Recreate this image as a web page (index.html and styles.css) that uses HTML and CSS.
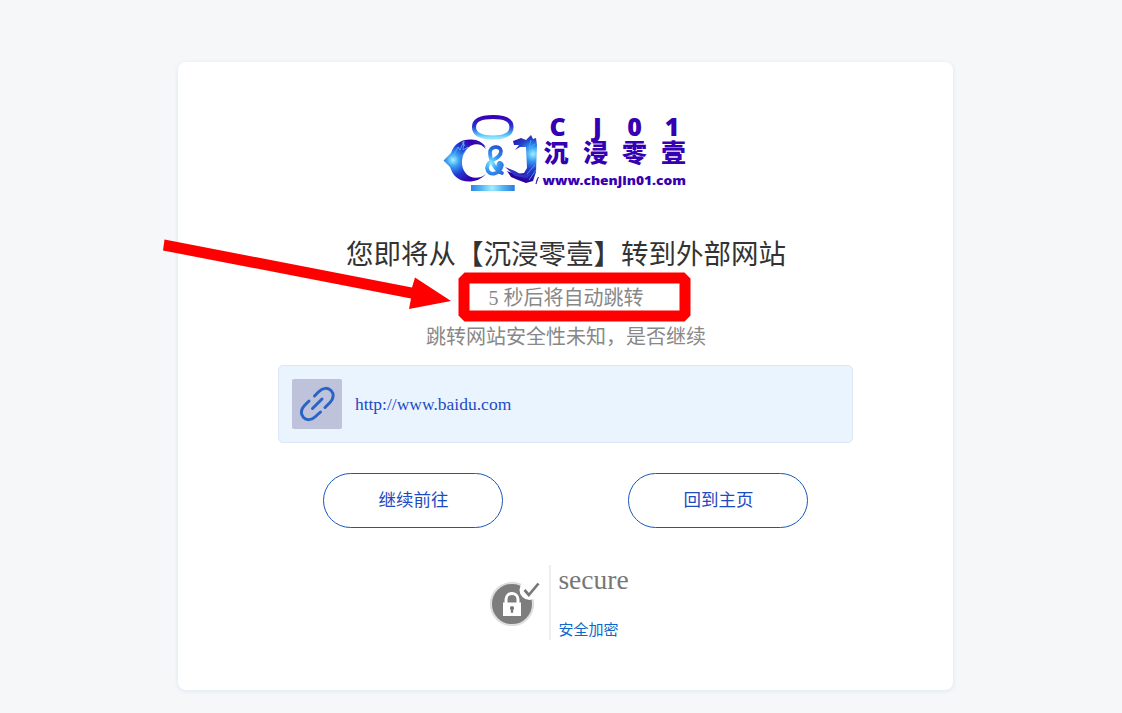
FILE: index.html
```html
<!DOCTYPE html>
<html lang="zh-CN">
<head>
<meta charset="utf-8">
<title>沉浸零壹</title>
<link rel="stylesheet" href="styles.css">
</head>
<body>
<main class="card">
  <svg class="logo" viewBox="436 106 260 92" role="img" aria-label="沉浸零壹">
    <defs>
      <linearGradient id="ring" x1="0" y1="0" x2="0" y2="1">
        <stop offset="0" stop-color="#3900b5"/><stop offset=".45" stop-color="#2735d2"/><stop offset=".85" stop-color="#54bff8"/><stop offset="1" stop-color="#8ce4ff"/>
      </linearGradient>
      <radialGradient id="glow" gradientUnits="userSpaceOnUse" cx="453" cy="160" r="25">
        <stop offset="0" stop-color="#a5f3ff"/><stop offset=".25" stop-color="#3aa0f4"/><stop offset=".6" stop-color="#203ad0"/><stop offset="1" stop-color="#3300b0"/>
      </radialGradient>
      <radialGradient id="amp" gradientUnits="userSpaceOnUse" cx="491" cy="163" r="22">
        <stop offset="0" stop-color="#87ebff"/><stop offset=".35" stop-color="#329af2"/><stop offset="1" stop-color="#2836cb"/>
      </radialGradient>
      <radialGradient id="hook" gradientUnits="userSpaceOnUse" cx="533" cy="154" r="29">
        <stop offset="0" stop-color="#9cf0ff"/><stop offset=".25" stop-color="#359af2"/><stop offset=".52" stop-color="#273fc9"/><stop offset="1" stop-color="#2a009c"/>
      </radialGradient>
      <radialGradient id="bar" gradientUnits="userSpaceOnUse" cx="492" cy="188" r="23">
        <stop offset="0" stop-color="#a3f2ff"/><stop offset=".45" stop-color="#55b9f5"/><stop offset="1" stop-color="#267bdc"/>
      </radialGradient>
    </defs>
    <path d="M493 117C507 117 511.500 121 511.500 127S507 137.500 493 137.500 474 133 474 127 479 117 493 117Z" fill="none" stroke="url(#ring)" stroke-width="4.100"/>
    <path fill="url(#glow)" d="M443.500 160.500 451 153C454 144 461 139.500 470 139.500C477 139 482 142 486 147C478 142.500 471 144 467 149C459 158 461 172 470 176.500C475 179 481 178 486 174C480 181 470 183 462 180.500C454 177.500 452 172 450 167Z"/>
    <path d="M453 157l5-10 2 3 4-9-1 9 5-3-7 10M462 142l3 4" fill="none" stroke="#58b7fa" stroke-width=".8"/>
    <path d="M475 140l8 4 3 5-6-5-7-2Z" fill="#3412b6"/>
    <path fill="none" stroke="url(#amp)" stroke-width="3.700" stroke-linecap="round" stroke-linejoin="round" d="M502 173C496 171 490 161 490 153C489 146 501 145 501 151C501 160 487 159 487 168C488 177 500 175 502 165C500 160 496 165 500 168"/>
    <path fill="url(#hook)" d="M513 141 521 138 526 140 529 137 531 135 533 139 536 138 537 145 536 172 533 181 526 183 518 180 511 177 507 171 515 174 524 173 527 168 526 147 520 147 515 150 519 145 514 145Z"/>
    <path d="M505 167l10 4 7 4 10-2-5 5-12-2Z" fill="#2e34c8"/>
    <path d="M531 140l-2 8 6-4M527 174l8-9m-6 15 7-10" fill="none" stroke="#3bb8fb" stroke-width=".8"/>
    <path d="M538.500 177l-2.500 7 .8-4Z" fill="#3000aa" stroke="#3000aa" stroke-width=".6"/>
    <rect x="471" y="185" width="43.700" height="6" fill="url(#bar)"/>
    <g class="logo-text">
      <g class="logo-code"><text x="557.500" y="135.500">C</text><text x="597.500" y="135.500">J</text><text x="634.500" y="135.500">0</text><text x="672" y="135.500">1</text></g>
      <g class="logo-name"><text x="556" y="162">沉</text><text x="595.500" y="162">浸</text><text x="634.500" y="162">零</text><text x="673.500" y="162">壹</text></g>
      <text class="logo-domain" x="542.500" y="185" textLength="143.500" lengthAdjust="spacingAndGlyphs">www.chenjin01.com</text>
    </g>
  </svg>
  <h1 class="title">您即将从【沉浸零壹】转到外部网站</h1>
  <p class="message countdown">5 秒后将自动跳转</p>
  <p class="message">跳转网站安全性未知，是否继续</p>
  <div class="destination">
    <span class="link-tile">
      <svg width="50" height="50" viewBox="0 0 50 50" fill="none" stroke="#2864c5" stroke-width="3" stroke-linecap="round">
        <path d="M22.500 17l4.500-4.500c4-4 9-4 12-1s3 8-1 12L33 28.500M17 22l-4.500 4.500c-4 4-4 9-1 12s8 3 12-1L28.500 33M20.500 29.500l9.500-9.500"/>
      </svg>
    </span>
    <a class="url" href="#">http://www.baidu.com</a>
  </div>
  <div class="actions">
    <a class="button" href="#">继续前往</a>
    <a class="button" href="#">回到主页</a>
  </div>
  <div class="security">
    <svg class="lock" width="52" height="50" viewBox="0 0 52 50">
      <circle cx="24" cy="26" r="21.100" fill="#7d7d7d" stroke="#dedede" stroke-width="2.200"/>
      <circle cx="41.500" cy="12" r="10" fill="#fff"/>
      <path d="M36.500 12l4.300 5L50.500 5.500" fill="none" stroke="#777" stroke-width="2.700"/>
      <path d="M18 26v-4.500c0-8 12-8 12 0V26" fill="none" stroke="#fff" stroke-width="3"/>
      <rect x="15" y="24.500" width="18" height="13.500" fill="#fff"/>
      <path d="M24 28a2.200 2.200 0 0 1 1.200 4v2.800h-2.400V32A2.200 2.200 0 0 1 24 28Z" fill="#777"/>
    </svg>
    <div class="security-text">
      <span class="secure">secure</span>
      <span class="encrypted">安全加密</span>
    </div>
  </div>
</main>
<svg class="annotation" width="1122" height="713" viewBox="0 0 1122 713" aria-hidden="true">
  <path fill="#f00" d="M164.500 239.500 412 287.500 415 277.500 451 301 409 309 411 298.500 163 250.500Z"/>
  <path fill="#f00" fill-rule="evenodd" d="M464.500 272.500h220l6 6v37l-6 6h-220l-6-6v-37ZM469.500 283.500v27h210v-27Z"/>
</svg>
</body>
</html>
```
FILE: styles.css
```css
* { box-sizing: border-box; }
body {
  margin: 0;
  height: 713px;
  overflow: hidden;
  background: #f5f7f9;
  padding: 62px 0 0 178.400px;
  font-family: "Liberation Serif", "Noto Sans CJK SC", serif;
}
.card {
  width: 775px;
  height: 628px;
  padding-top: 44px;
  border-radius: 8px;
  background: #fff;
  box-shadow: 0 1px 4px #dce5ef;
  display: flex;
  flex-direction: column;
  align-items: center;
}
.logo { width: 260px; height: 92px; flex: none; }
.logo-text { fill: #3600b2; font-family: "Noto Sans", "Noto Sans CJK SC", sans-serif; font-weight: 900; }
.logo-code { font-size: 25px; text-anchor: middle; }
.logo-name { font-family: "Noto Sans CJK SC", sans-serif; font-size: 25px; text-anchor: middle; }
.logo-domain { font-size: 13px; }
.title {
  margin: 37px 0 0;
  height: 40px;
  line-height: 40px;
  font-size: 27.500px;
  font-weight: 400;
  color: #333;
  white-space: nowrap;
}
.message {
  margin: 0;
  height: 39px;
  line-height: 39px;
  font-size: 20px;
  color: #888;
}
.countdown { margin-top: 4px; }
.destination {
  width: 575px;
  height: 78px;
  margin-top: 8px;
  padding: 0 13px;
  display: flex;
  align-items: center;
  gap: 12.500px;
  background: #eaf4ff;
  border: 1px solid #dce8f5;
  border-radius: 5px;
}
.link-tile { width: 50px; height: 50px; background: #bec2da; border-radius: 2px; }
.url { font-size: 17.500px; color: #1d4bc4; text-decoration: none; }
.actions { display: flex; gap: 125px; margin-top: 30px; }
.button {
  width: 180px;
  height: 55px;
  line-height: 53px;
  border: 1px solid #1857bc;
  border-radius: 28px;
  text-align: center;
  font-size: 17.500px;
  color: #1d4bc4;
  text-decoration: none;
}
.security { width: 156px; height: 75px; margin-top: 37px; display: flex; }
.lock { margin-top: 13px; flex: none; }
.security-text {
  margin-left: 9px;
  padding-left: 7.500px;
  border-left: 2px solid #eee;
  display: flex;
  flex-direction: column;
  justify-content: space-between;
}
.secure { font-size: 27.500px; line-height: 29px; color: #777; }
.encrypted { font-size: 15px; line-height: 20px; color: #0b69cc; white-space: nowrap; }
.annotation { position: absolute; left: 0; top: 0; pointer-events: none; }
```
